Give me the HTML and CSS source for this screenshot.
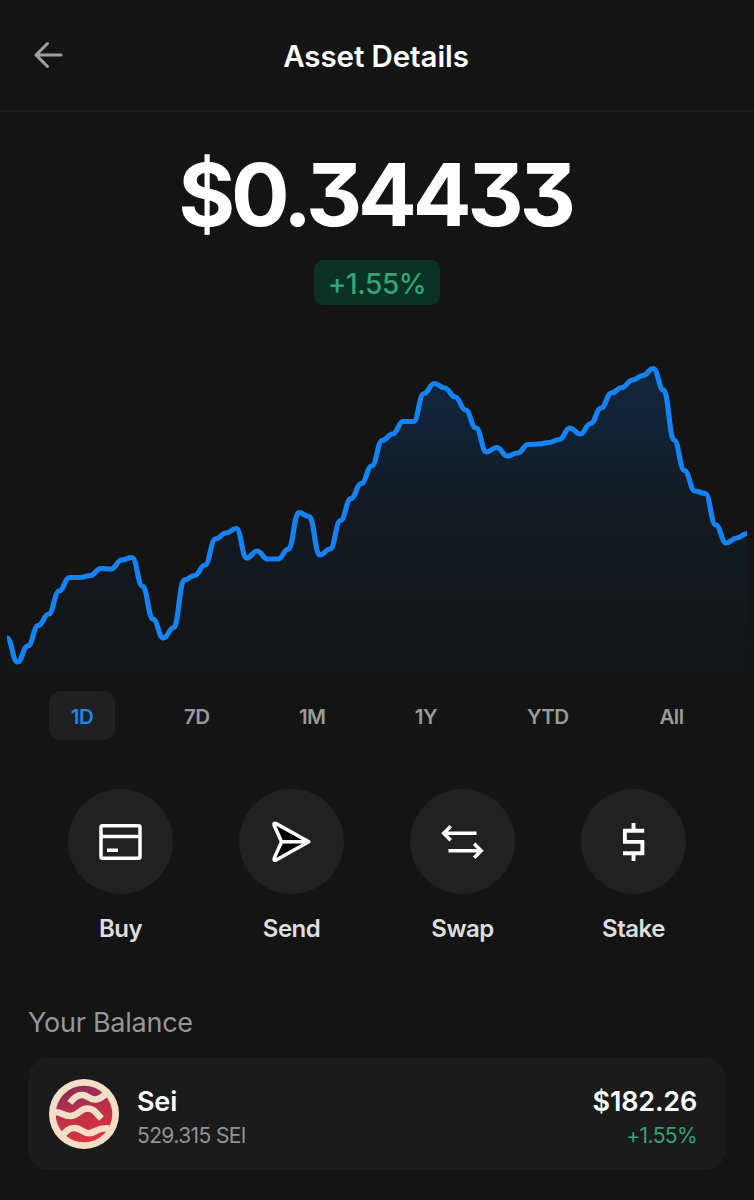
FILE: index.html
```html
<!DOCTYPE html>
<html lang="en">
<head>
    <meta charset="UTF-8">
    <title>Asset Details</title>
    <link rel="stylesheet" href="styles.css">
</head>
<body>

    <header class="header">
        <button class="back-button" aria-label="Back">
            <svg width="30" height="30" viewBox="0 0 30 30">
                <path d="M28 15H3M14.5 3.5L3 15L14.5 26.5"/>
            </svg>
        </button>
        <h1 class="page-title">Asset Details</h1>
    </header>

    <section class="price-section">
        <div class="price">$0.34433</div>
        <div class="change-badge">+1.55%</div>
    </section>

    <svg class="chart" width="740" height="340" viewBox="7 350 740 340">
        <defs>
            <linearGradient id="chartFill" gradientUnits="userSpaceOnUse" x1="0" y1="366" x2="0" y2="690">
                <stop offset="0" stop-color="#11263d"/>
                <stop offset="0.22" stop-color="#112234"/>
                <stop offset="0.42" stop-color="#131a21"/>
                <stop offset="0.75" stop-color="#13171a"/>
                <stop offset="1" stop-color="#141415"/>
            </linearGradient>
        </defs>
        <path id="chartArea" fill="url(#chartFill)"/>
        <path id="chartLine" class="chart-line"/>
    </svg>

    <nav class="ranges">
        <button class="range active">1D</button>
        <button class="range">7D</button>
        <button class="range">1M</button>
        <button class="range">1Y</button>
        <button class="range">YTD</button>
        <button class="range">All</button>
    </nav>

    <section class="actions">
        <div class="action">
            <button class="action-icon" aria-label="Buy">
                <svg width="48" height="48" viewBox="0 0 48 48">
                    <rect x="4" y="7.7" width="39" height="32.6" rx="1.5"/>
                    <path d="M4 18.6H43M10 32.3H21"/>
                </svg>
            </button>
            <span class="action-label">Buy</span>
        </div>
        <div class="action">
            <button class="action-icon" aria-label="Send">
                <svg width="48" height="48" viewBox="0 0 48 48">
                    <path class="plane" d="M6 7Q5.6 4.4 8.2 5.6L40.8 23.8L8.2 42Q5.4 43 6.2 40.4L13.6 23.8Z"/>
                    <path d="M13.6 23.8H40"/>
                </svg>
            </button>
            <span class="action-label">Send</span>
        </div>
        <div class="action">
            <button class="action-icon" aria-label="Swap">
                <svg width="48" height="48" viewBox="0 0 48 48">
                    <path d="M37.5 15.2H4.5M11.7 8.2L4.7 15.2L11.7 22.2M9.5 32.7H42.5M35.2 25.7L42.2 32.7L35.2 39.7"/>
                </svg>
            </button>
            <span class="action-label">Swap</span>
        </div>
        <div class="action">
            <button class="action-icon" aria-label="Stake">
                <svg width="48" height="48" viewBox="0 0 48 48">
                    <path class="thick" d="M34.2 12.8H14.9V23.9H32.4V35.2H13M23.5 5V12.8M23.5 35.2V43"/>
                </svg>
            </button>
            <span class="action-label">Stake</span>
        </div>
    </section>

    <section class="balance-section">
        <h2 class="balance-title">Your Balance</h2>
        <div class="balance-card">
            <svg class="coin" width="70" height="70" viewBox="0 0 70 70">
                <defs>
                    <linearGradient id="coinFill" x1="0.3" y1="0" x2="0.6" y2="1">
                        <stop offset="0" stop-color="#8c2b58"/>
                        <stop offset="0.5" stop-color="#bd3047"/>
                        <stop offset="1" stop-color="#dc343f"/>
                    </linearGradient>
                </defs>
                <circle cx="35" cy="35" r="35" fill="#f3dfc8"/>
                <circle cx="35" cy="35" r="28.3" fill="url(#coinFill)"/>
                <path class="wave" d="M21 24C25 18 29 15.5 34 16C40 17 41 21 47 20.5C52 20 54 17 58 14"/>
                <path class="wave" d="M5 33.5C12 32 14 37 21 37C29 37 31 29.5 38 29.5C45 29.5 47 34 52.5 39.5"/>
                <path class="wave" d="M12 58C17 52 20 48.5 26 49C33 49.5 34 54.5 40 54.2C47 54 48 48 60 49.5"/>
            </svg>
            <div class="coin-info">
                <div class="coin-name">Sei</div>
                <div class="coin-amount">529.315 SEI</div>
            </div>
            <div class="coin-value">
                <div class="value">$182.26</div>
                <div class="value-change">+1.55%</div>
            </div>
        </div>
    </section>

    <script>
        const prices = [
            638, 662, 646, 625.5, 614, 591, 577.5, 577.5, 575.5, 568.5, 569, 560,
            557.5, 586, 619, 638, 627.5, 580, 575.5, 565, 539, 533, 528.5, 558,
            551, 559, 559, 549, 512.5, 516.5, 555, 549, 520.5, 498.5, 483.5, 466,
            440.5, 434, 421.5, 421.5, 393.5, 383.5, 388, 397, 410, 428, 452, 447.5,
            456, 453, 444.5, 444, 442.5, 439.5, 428, 434, 423.5, 408, 393, 387.5,
            380, 375.5, 368.5, 390, 440, 470.5, 491, 493.5, 525, 543, 538, 533.5
        ];
        const startX = 7;
        const step = 740 / (prices.length - 1);

        function drawChart() {
            let line = `M${startX} ${prices[0]}`;
            for (let i = 1; i < prices.length; i++) {
                const x0 = startX + (i - 1) * step;
                const x1 = startX + i * step;
                line += `C${x0 + step * 0.45} ${prices[i - 1]} ${x1 - step * 0.45} ${prices[i]} ${x1} ${prices[i]}`;
            }
            document.getElementById('chartLine').setAttribute('d', line);
            document.getElementById('chartArea').setAttribute('d', line + 'V690H7Z');
        }

        drawChart();
    </script>

</body>
</html>
```

FILE: styles.css
```css
* {
    box-sizing: border-box;
}

body {
    margin: 0;
    height: 1200px;
    overflow: hidden;
    background-color: #141414;
    color: #ffffff;
    font-family: Inter, "Liberation Sans", sans-serif;
}

button {
    padding: 0;
    border: none;
    background: none;
    font-family: inherit;
    cursor: pointer;
}

svg {
    display: block;
    fill: none;
}

.header {
    display: grid;
    grid-template-columns: 60px 1fr 60px;
    align-items: center;
    height: 112px;
    padding: 0 33px;
    border-bottom: 2px solid #1c1c1c;
}

.back-button svg {
    stroke: #a0a0a0;
    stroke-width: 3;
    stroke-linecap: round;
    stroke-linejoin: round;
}

.page-title {
    margin: 1px 2px 0 0;
    text-align: center;
    font-size: 29.5px;
    font-weight: 600;
    letter-spacing: -0.1px;
}

.price-section {
    display: flex;
    flex-direction: column;
    align-items: center;
    height: 238px;
    padding-top: 34px;
}

.price {
    height: 114px;
    line-height: 98px;
    font-size: 87px;
    font-weight: 700;
    letter-spacing: -4.1px;
    margin-left: -4px;
    font-feature-settings: "cv09";
}

.change-badge {
    width: 126px;
    height: 45px;
    line-height: 48px;
    border-radius: 9px;
    background-color: #0b3224;
    color: #35a476;
    text-align: center;
    font-size: 28px;
    font-weight: 500;
    letter-spacing: -0.4px;
}

.chart {
    margin-left: 7px;
}

.chart-line {
    stroke: #1683f5;
    stroke-width: 5.2;
    stroke-linejoin: round;
}

.ranges {
    display: grid;
    grid-template-columns: 66px 66px 67px 63px 83px 67px;
    justify-content: space-between;
    margin: 1px 49px 0;
}

.range {
    height: 49px;
    border-radius: 12px;
    color: #9b9b9b;
    font-size: 20.5px;
    font-weight: 600;
    line-height: 51px;
    letter-spacing: -0.6px;
}

.range.active {
    background-color: #202020;
    color: #1f86ea;
}

.actions {
    display: flex;
    justify-content: space-between;
    margin: 49px 68px 0;
}

.action {
    display: flex;
    flex-direction: column;
    align-items: center;
    width: 105px;
}

.action-icon {
    display: flex;
    align-items: center;
    justify-content: center;
    width: 105px;
    height: 105px;
    border-radius: 50%;
    background-color: #212121;
}

.action-icon svg {
    stroke: #ffffff;
    stroke-width: 3.5;
}

.action-icon .plane {
    fill: #000000;
    stroke-linejoin: round;
}

.action-icon .thick {
    stroke-width: 3.9;
}

.action-label {
    margin-top: 19px;
    line-height: 32px;
    color: #dedede;
    font-size: 24px;
    font-weight: 600;
    letter-spacing: -0.5px;
}

.balance-section {
    padding: 60px 28px 0;
}

.balance-title {
    margin: 0;
    height: 53px;
    line-height: 35px;
    color: #979797;
    font-size: 27px;
    font-weight: 400;
    letter-spacing: -0.25px;
}

.balance-card {
    display: flex;
    align-items: center;
    height: 112px;
    padding: 0 29px 0 21px;
    border-radius: 21px;
    background-color: #1b1b1b;
}

.wave {
    stroke: #f3dfc8;
    stroke-width: 6.6;
}

.coin-info {
    flex: 1;
    margin-left: 18px;
    padding-top: 7px;
}

.coin-name,
.value {
    line-height: 36px;
    font-size: 27px;
    font-weight: 600;
    letter-spacing: -0.2px;
}

.coin-amount,
.value-change {
    line-height: 32px;
    color: #929292;
    font-size: 21px;
    letter-spacing: -0.6px;
}

.coin-value {
    padding-top: 7px;
    text-align: right;
}

.value-change {
    color: #35a476;
}
```
